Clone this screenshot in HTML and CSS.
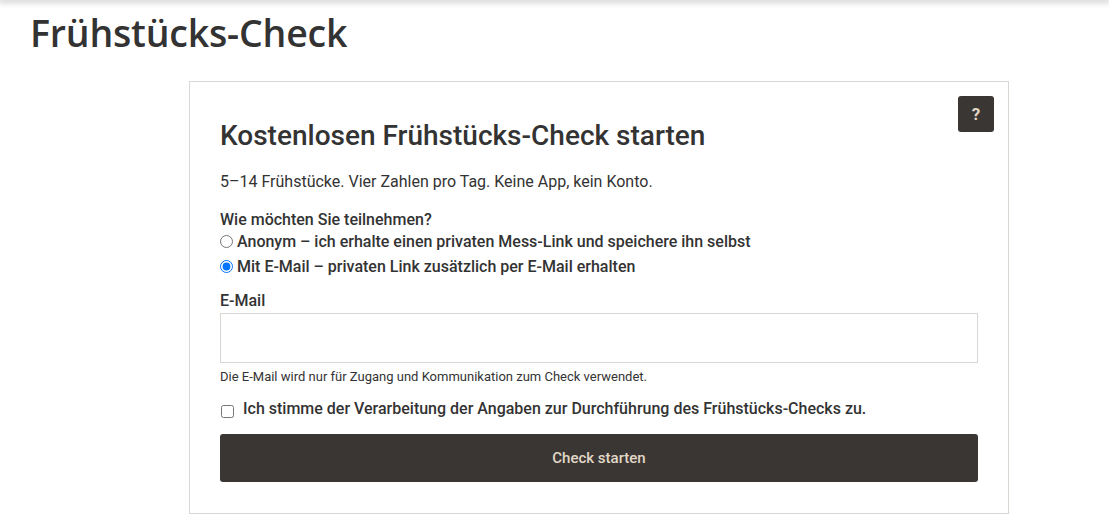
FILE: index.html
```html
<!DOCTYPE html>
<html lang="de">
<head>
<meta charset="utf-8">
<title>Frühstücks-Check</title>
<link rel="stylesheet" href="styles.css">
</head>
<body>
<div class="topbar"></div>
<header class="page-head">
  <h1 class="page-title">Frühstücks-Check</h1>
</header>
<main class="card">
  <button class="help-btn" type="button">?</button>
  <h2 class="card-title">Kostenlosen Frühstücks-Check starten</h2>
  <p class="lead">5–14 Frühstücke. Vier Zahlen pro Tag. Keine App, kein Konto.</p>
  <form class="form">
    <fieldset class="mode">
      <div class="label">Wie möchten Sie teilnehmen?</div>
      <label class="radio-row"><input type="radio" name="mode"> Anonym – ich erhalte einen privaten Mess-Link und speichere ihn selbst</label>
      <label class="radio-row"><input type="radio" name="mode" checked> Mit E-Mail – privaten Link zusätzlich per E-Mail erhalten</label>
    </fieldset>
    <div class="field">
      <label class="label" for="email">E-Mail</label>
      <input class="input" id="email" type="email">
      <div class="hint">Die E-Mail wird nur für Zugang und Kommunikation zum Check verwendet.</div>
    </div>
    <label class="check-row"><input type="checkbox"><span>Ich stimme der Verarbeitung der Angaben zur Durchführung des Frühstücks-Checks zu.</span></label>
    <button class="submit" type="button">Check starten</button>
  </form>
</main>
</body>
</html>
```
FILE: styles.css
```css
* { box-sizing: border-box; }
html, body { margin: 0; padding: 0; background: #fff; }
body {
  font-family: Roboto, "Liberation Sans", sans-serif;
  color: #333;
  font-size: 16px;
}
.topbar {
  height: 0;
  box-shadow: 0 0 6px 2px rgba(0,0,0,0.25);
}
.page-head {
  padding: 10px 30px 0;
  height: 81px;
}
.page-title {
  margin: 0;
  font-family: "Open Sans", "Noto Sans", sans-serif;
  font-weight: 600;
  font-size: 37.5px;
  line-height: 46px;
  color: #333;
  letter-spacing: -0.2px;
}
.card {
  position: relative;
  margin-left: 189px;
  width: 820px;
  border: 1px solid #d9d7d2;
  padding: 38px 30px 31px;
}
.help-btn {
  position: absolute;
  top: 14px;
  right: 14px;
  width: 36px;
  height: 36px;
  border: 0;
  border-radius: 3px;
  background: #393634;
  color: #e2d8c6;
  font-family: Roboto, sans-serif;
  font-weight: 700;
  font-size: 17px;
  padding: 0;
}
.card-title {
  margin: 0;
  font-size: 28px;
  font-weight: 500;
  line-height: 32px;
  color: #333;
}
.lead {
  margin: 18px 0 0;
  font-size: 16px;
  line-height: 24px;
  color: #333;
}
.form { margin-top: 16px; }
.mode { border: 0; padding: 0; margin: 0; }
.label {
  display: block;
  font-weight: 500;
  font-size: 16px;
  line-height: 19px;
  color: #333;
}
.radio-row {
  display: flex;
  align-items: center;
  font-weight: 500;
  font-size: 16px;
  line-height: 25px;
}
.radio-row input {
  margin: 0 4px 0 0;
  width: 13px;
  height: 13px;
}
.field { margin-top: 12px; }
.input {
  display: block;
  width: 100%;
  height: 50px;
  margin-top: 3px;
  border: 1px solid #d9d7d2;
  border-radius: 0;
  background: #fff;
}
.hint {
  margin-top: 6px;
  font-size: 13px;
  line-height: 16px;
  color: #333;
}
.check-row {
  display: flex;
  align-items: flex-start;
  margin-top: 14px;
  font-weight: 500;
  font-size: 16px;
  line-height: 20px;
}
.check-row input {
  margin: 6px 9px 0 1px;
  width: 13px;
  height: 13px;
}
.submit {
  display: block;
  width: 100%;
  height: 48px;
  margin-top: 15px;
  border: 0;
  border-radius: 3px;
  background: #393634;
  color: #e2d8c6;
  font-family: Roboto, sans-serif;
  font-weight: 500;
  font-size: 15px;
}
```
